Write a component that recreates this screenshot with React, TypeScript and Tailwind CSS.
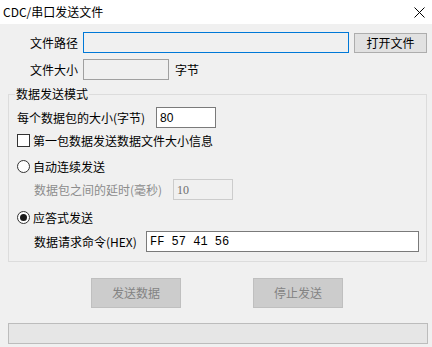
function Radio({ checked }: { checked?: boolean }) {
  return (
    <span className="w-[13px] h-[13px] rounded-full border border-[#333] bg-white flex items-center justify-center shrink-0">
      {checked && <span className="w-[7px] h-[7px] rounded-full bg-[#1a1a1a]" />}
    </span>
  );
}

export default function App() {
  return (
    <div className="w-[432px] h-[347px] overflow-hidden bg-[#f0f0f0] text-[12px] leading-[16px] text-black font-['Microsoft_YaHei','Noto_Sans_CJK_SC',sans-serif]">
      <div className="h-[24px] bg-white flex items-center justify-between pl-[3px] pr-[7px]">
        <span>CDC/串口发送文件</span>
        <svg width="11" height="11" viewBox="0 0 11 11" className="text-black">
          <path d="M0.5 0.5 L10.5 10.5 M10.5 0.5 L0.5 10.5" stroke="currentColor" strokeWidth="1" />
        </svg>
      </div>

      <div className="flex items-center mt-[8px] h-[21px]">
        <span className="ml-[30px] w-[53px]">文件路径</span>
        <div className="w-[266px] h-[21px] border border-[#0078d7] bg-[#f0f0f0]" />
        <button className="ml-[5px] w-[73px] h-[20px] border border-[#adadad] bg-[#e1e1e1] text-[12px] leading-[16px]">
          打开文件
        </button>
      </div>

      <div className="flex items-center mt-[6px] h-[21px]">
        <span className="ml-[30px] w-[53px]">文件大小</span>
        <div className="w-[86px] h-[21px] border border-[#a0a0a0] bg-[#f0f0f0]" />
        <span className="ml-[6px]">字节</span>
      </div>

      <div className="relative mt-[14px] ml-[8px] w-[419px] h-[168px] border border-[#dcdcdc] pl-[8px]">
        <span className="absolute -top-[9px] left-[6px] px-[1px] bg-[#f0f0f0]">数据发送模式</span>

        <div className="flex items-center mt-[12px] h-[21px]">
          <span className="w-[139px]">每个数据包的大小(字节)</span>
          <div className="w-[60px] h-[21px] border border-[#7a7a7a] bg-white flex items-center pl-[3px] font-['Liberation_Sans',sans-serif]">
            80
          </div>
        </div>

        <div className="flex items-center gap-[3px] mt-[6px] h-[13px]">
          <span className="w-[13px] h-[13px] border border-[#333] bg-white shrink-0" />
          <span>第一包数据发送数据文件大小信息</span>
        </div>

        <div className="flex items-center gap-[3px] mt-[13px] h-[13px]">
          <Radio />
          <span>自动连续发送</span>
        </div>

        <div className="flex items-center mt-[6px] h-[21px] ml-[17px]">
          <span className="w-[139px] text-[#8c8c8c]">数据包之间的延时(毫秒)</span>
          <div className="w-[60px] h-[21px] border border-[#cccccc] bg-[#f0f0f0] flex items-center pl-[3px] text-[#6d6d6d] font-['Liberation_Serif',serif]">
            10
          </div>
        </div>

        <div className="flex items-center gap-[3px] mt-[11px] h-[13px]">
          <Radio checked />
          <span>应答式发送</span>
        </div>

        <div className="flex items-center mt-[7px] h-[21px] ml-[17px]">
          <span className="w-[112px]">数据请求命令(HEX)</span>
          <div className="w-[273px] h-[21px] border border-[#7a7a7a] bg-white flex items-center pl-[3px] font-['Liberation_Mono',monospace]">
            FF 57 41 56
          </div>
        </div>
      </div>

      <div className="flex mt-[16px] h-[30px]">
        <button className="ml-[91px] w-[90px] h-[30px] border border-[#bfbfbf] bg-[#cccccc] text-[#838383] text-[12px]">
          发送数据
        </button>
        <button className="ml-[72px] w-[90px] h-[30px] border border-[#bfbfbf] bg-[#cccccc] text-[#838383] text-[12px]">
          停止发送
        </button>
      </div>

      <div className="mt-[15px] ml-[8px] w-[420px] h-[21px] border border-[#bcbcbc] bg-[#e6e6e6]" />
    </div>
  );
}
